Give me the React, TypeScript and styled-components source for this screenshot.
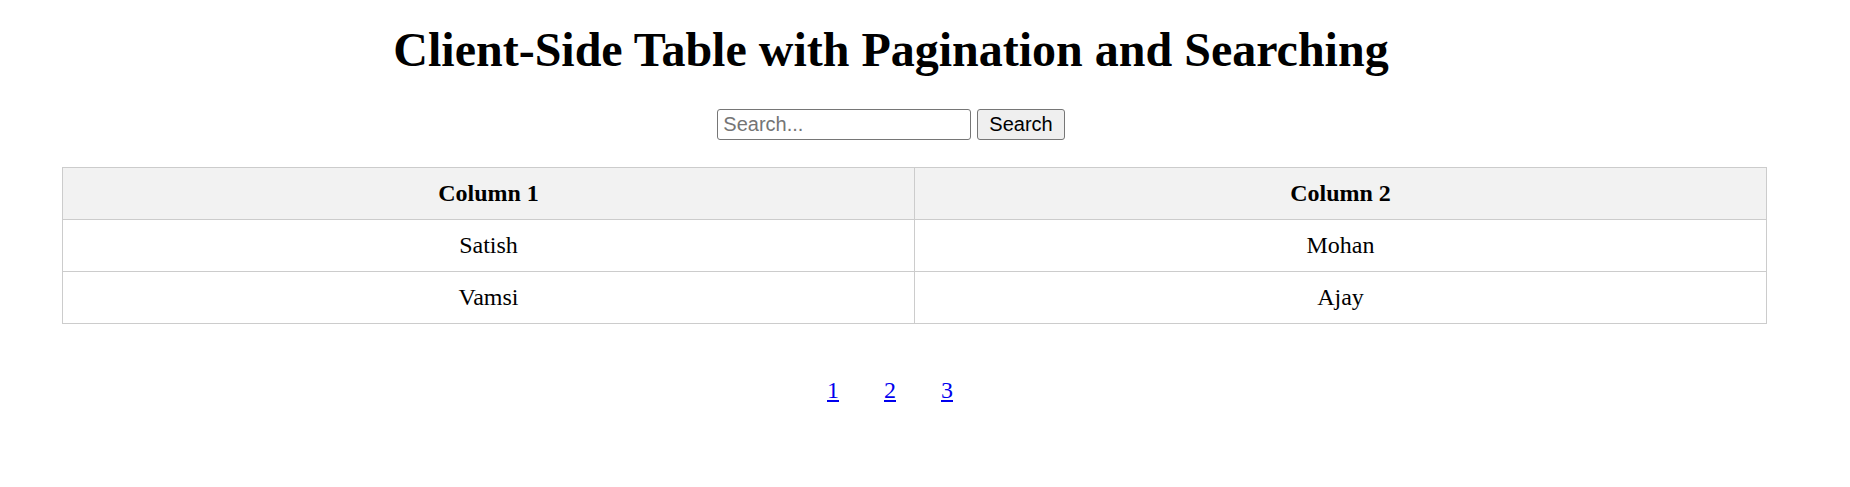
import React, { useState } from "react";
import styled, { createGlobalStyle } from "styled-components";

type Row = { col1: string; col2: string };

const data: Row[] = [
  { col1: "Satish", col2: "Mohan" },
  { col1: "Vamsi", col2: "Ajay" },
];

const pages = [1, 2, 3];

const App: React.FC = () => {
  const [query, setQuery] = useState<string>("");

  return (
    <>
      <GlobalStyle />
      <Page>
        <Title>Client-Side Table with Pagination and Searching</Title>
        <SearchBar>
          <SearchInput
            type="text"
            placeholder="Search..."
            value={query}
            onChange={(e) => setQuery(e.target.value)}
          />
          <SearchButton>Search</SearchButton>
        </SearchBar>
        <Table>
          <thead>
            <tr>
              <HeadCell>Column 1</HeadCell>
              <HeadCell>Column 2</HeadCell>
            </tr>
          </thead>
          <tbody>
            {data.map((row) => (
              <tr key={row.col1}>
                <Cell>{row.col1}</Cell>
                <Cell>{row.col2}</Cell>
              </tr>
            ))}
          </tbody>
        </Table>
        <Pagination>
          {pages.map((p) => (
            <PageLink key={p} href="#">
              {p}
            </PageLink>
          ))}
        </Pagination>
      </Page>
    </>
  );
};

export default App;

const GlobalStyle = createGlobalStyle`
  body {
    margin: 0;
    background: #fff;
    font-family: "Liberation Serif", "Times New Roman", serif;
    font-size: 24px;
    color: #000;
  }
`;

const Page = styled.div`
  width: 1766px;
  margin-left: 8px;
  display: flex;
  flex-direction: column;
  align-items: center;
  padding-top: 22px;
`;

const Title = styled.h1`
  margin: 0;
  font-size: 48px;
  font-weight: bold;
  line-height: 55px;
`;

const SearchBar = styled.div`
  display: flex;
  gap: 6px;
  margin-top: 32px;
`;

const SearchInput = styled.input`
  box-sizing: border-box;
  width: 254px;
  height: 31px;
  padding: 0 5px;
  border: 1px solid #767676;
  border-radius: 3px;
  font-family: "Liberation Sans", Arial, sans-serif;
  font-size: 20px;
  color: #000;
  &::placeholder {
    color: #757575;
  }
`;

const SearchButton = styled.button`
  box-sizing: border-box;
  height: 31px;
  padding: 0 11px;
  border: 1px solid #767676;
  border-radius: 3px;
  background: #efefef;
  font-family: "Liberation Sans", Arial, sans-serif;
  font-size: 20px;
  color: #000;
`;

const Table = styled.table`
  align-self: flex-start;
  margin-left: 54px;
  margin-top: 27px;
  width: 1705px;
  border-collapse: collapse;
  table-layout: fixed;
`;

const HeadCell = styled.th`
  border: 1px solid #ccc;
  background: #f2f2f2;
  padding: 12px;
  font-weight: bold;
  text-align: center;
  line-height: 27px;
`;

const Cell = styled.td`
  border: 1px solid #ccc;
  padding: 12px;
  text-align: center;
  line-height: 27px;
`;

const Pagination = styled.div`
  display: flex;
  gap: 45px;
  margin-top: 53px;
  margin-right: 2px;
  line-height: 27px;
`;

const PageLink = styled.a`
  color: #0000ee;
  text-decoration: underline;
`;
